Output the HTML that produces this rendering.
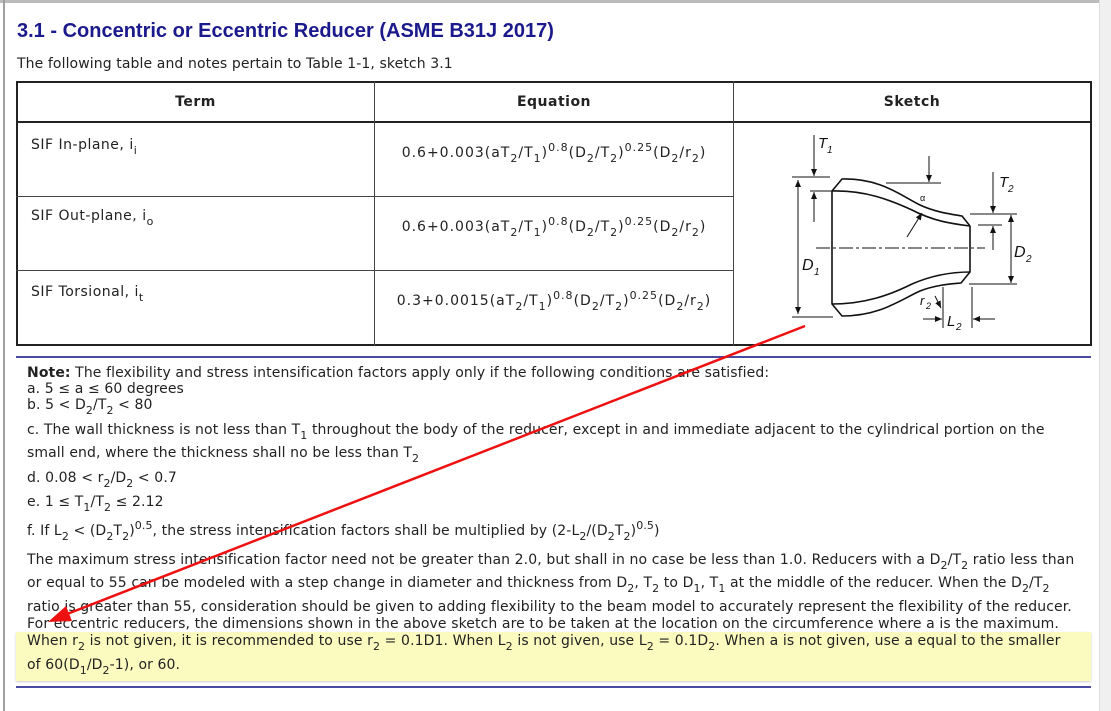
<!DOCTYPE html>
<html><head><meta charset="utf-8">
<style>
*{margin:0;padding:0;box-sizing:border-box}
body{width:1111px;height:711px;background:#fff;position:relative;overflow:hidden;font-family:"DejaVu Sans","Liberation Sans",sans-serif;font-size:14px;color:#222}
.l{position:absolute;white-space:nowrap;letter-spacing:0.1px;line-height:16px}
sub{font-size:11px;vertical-align:-5px;line-height:0}
sup{font-size:11px;vertical-align:6px;line-height:0}
h1{position:absolute;left:17px;top:20px;font-family:"Liberation Sans",sans-serif;font-weight:bold;font-size:20px;color:#1a1a8c;white-space:nowrap}
.cell{position:absolute;white-space:nowrap;letter-spacing:0.5px}
.eq{position:absolute;width:358px;text-align:center;white-space:nowrap;letter-spacing:1px}
</style></head><body>
<div style="position:absolute;left:0;top:0;width:1100px;height:3px;background:#bbb"></div>
<div style="position:absolute;left:3px;top:0;width:2px;height:711px;background:#a0a0a0"></div>
<div style="position:absolute;left:1099px;top:0;width:12px;height:711px;background:#f0f0f0;border-left:1px solid #ddd"></div>

<h1>3.1 - Concentric or Eccentric Reducer (ASME B31J 2017)</h1>
<div class="l" style="left:17px;top:56px">The following table and notes pertain to Table 1-1, sketch 3.1</div>

<div style="position:absolute;left:16px;top:81px;width:1076px;height:265px;border:2px solid #222"></div>
<div style="position:absolute;left:16px;top:121px;width:1076px;height:2px;background:#222"></div>
<div style="position:absolute;left:16px;top:196px;width:718px;height:1px;background:#444"></div>
<div style="position:absolute;left:16px;top:270px;width:718px;height:1px;background:#444"></div>
<div style="position:absolute;left:374px;top:81px;width:1px;height:265px;background:#444"></div>
<div style="position:absolute;left:733px;top:81px;width:1px;height:265px;background:#444"></div>
<div class="cell" style="left:16px;width:359px;text-align:center;top:94px;font-weight:bold">Term</div>
<div class="cell" style="left:375px;width:358px;text-align:center;top:94px;font-weight:bold">Equation</div>
<div class="cell" style="left:733px;width:358px;text-align:center;top:94px;font-weight:bold">Sketch</div>

<div class="cell" style="left:31px;top:137px">SIF In-plane, i<sub>i</sub></div>
<div class="cell" style="left:31px;top:208px">SIF Out-plane, i<sub>o</sub></div>
<div class="cell" style="left:31px;top:284px">SIF Torsional, i<sub>t</sub></div>
<div class="eq" style="left:375px;top:145px">0.6+0.003(aT<sub>2</sub>/T<sub>1</sub>)<sup>0.8</sup>(D<sub>2</sub>/T<sub>2</sub>)<sup>0.25</sup>(D<sub>2</sub>/r<sub>2</sub>)</div>
<div class="eq" style="left:375px;top:219px">0.6+0.003(aT<sub>2</sub>/T<sub>1</sub>)<sup>0.8</sup>(D<sub>2</sub>/T<sub>2</sub>)<sup>0.25</sup>(D<sub>2</sub>/r<sub>2</sub>)</div>
<div class="eq" style="left:375px;top:293px">0.3+0.0015(aT<sub>2</sub>/T<sub>1</sub>)<sup>0.8</sup>(D<sub>2</sub>/T<sub>2</sub>)<sup>0.25</sup>(D<sub>2</sub>/r<sub>2</sub>)</div>

<svg style="position:absolute;left:0;top:0" width="1111" height="711" viewBox="0 0 1111 711">
<defs><marker id="a" markerWidth="8" markerHeight="8" refX="7" refY="4" orient="auto" markerUnits="userSpaceOnUse"><path d="M0,1 L7,4 L0,7 Z" fill="#111"/></marker></defs>
<g fill="none" stroke="#111" stroke-width="1.6">
<path d="M832,191 L842,179 C880,178 900,195 920,205 C935,212 950,214 962,216 L970,226"/>
<path d="M832,191 C865,190 890,200 912,210 C935,222 955,224 970,226"/>
<path d="M832,191 L832,304 L842,316 C880,316 900,300 920,291 C935,285 950,284 961,283 L970,272 L970,226"/>
<path d="M832,304 C865,304 890,295 912,284 C935,274 955,272 970,272"/>
</g>
<g stroke="#111" stroke-width="1" fill="none">
<path d="M816,248 L985,248" stroke-dasharray="14,3,3,3"/>
<path d="M792,177 L830,177 M792,317 L833,317 M810,191 L832,191"/>
<path d="M798,180 L798,314" marker-end="url(#a)"/><path d="M798,250 L798,180" marker-end="url(#a)"/>
<path d="M814,135 L814,176" marker-end="url(#a)"/>
<path d="M814,222 L814,192" marker-end="url(#a)"/>
<path d="M886,183 L941,183"/><path d="M929,156 L929,182" marker-end="url(#a)"/>
<path d="M907,237 L922,213" marker-end="url(#a)"/>
<path d="M970,214 L1017,214 M978,225 L1002,225 M969,284 L1017,284"/>
<path d="M993,172 L993,213" marker-end="url(#a)"/>
<path d="M993,250 L993,226" marker-end="url(#a)"/>
<path d="M1011,250 L1011,215" marker-end="url(#a)"/><path d="M1011,250 L1011,283" marker-end="url(#a)"/>
<path d="M943,287 L943,328 M972,287 L972,328"/>
<path d="M923,319 L942,319" marker-end="url(#a)"/><path d="M995,319 L973,319" marker-end="url(#a)"/>
<path d="M935,296 L941,308" marker-end="url(#a)"/>
</g>
<g font-family="Liberation Sans,sans-serif" font-style="italic" fill="#111">
<text x="818" y="148" font-size="15">T</text><text x="827" y="153" font-size="10">1</text>
<text x="999" y="187" font-size="15">T</text><text x="1008" y="192" font-size="10">2</text>
<text x="802" y="270" font-size="16">D</text><text x="814" y="275" font-size="10">1</text>
<text x="1014" y="257" font-size="16">D</text><text x="1026" y="262" font-size="10">2</text>
<text x="920" y="305" font-size="13">r</text><text x="926" y="309" font-size="9">2</text>
<text x="947" y="326" font-size="15">L</text><text x="956" y="330" font-size="10">2</text>
<text x="920" y="201" font-size="9" font-style="normal">α</text>
</g>
</svg>

<div style="position:absolute;left:16px;top:356px;width:1075px;height:2px;background:#4a4aa0"></div>

<div class="l" style="left:27px;top:365px"><b>Note:</b> The flexibility and stress intensification factors apply only if the following conditions are satisfied:</div>
<div class="l" style="left:27px;top:381px">a. 5 ≤ a ≤ 60 degrees</div>
<div class="l" style="left:27px;top:397px">b. 5 &lt; D<sub>2</sub>/T<sub>2</sub> &lt; 80</div>
<div class="l" style="left:27px;top:422px">c. The wall thickness is not less than T<sub>1</sub> throughout the body of the reducer, except in and immediate adjacent to the cylindrical portion on the</div>
<div class="l" style="left:27px;top:445px">small end, where the thickness shall no be less than T<sub>2</sub></div>
<div class="l" style="left:27px;top:470px">d. 0.08 &lt; r<sub>2</sub>/D<sub>2</sub> &lt; 0.7</div>
<div class="l" style="left:27px;top:494px">e. 1 ≤ T<sub>1</sub>/T<sub>2</sub> ≤ 2.12</div>
<div class="l" style="left:27px;top:523px">f. If L<sub>2</sub> &lt; (D<sub>2</sub>T<sub>2</sub>)<sup>0.5</sup>, the stress intensification factors shall be multiplied by (2-L<sub>2</sub>/(D<sub>2</sub>T<sub>2</sub>)<sup>0.5</sup>)</div>
<div class="l" style="left:27px;top:552px">The maximum stress intensification factor need not be greater than 2.0, but shall in no case be less than 1.0. Reducers with a D<sub>2</sub>/T<sub>2</sub> ratio less than</div>
<div class="l" style="left:27px;top:575px">or equal to 55 can be modeled with a step change in diameter and thickness from D<sub>2</sub>, T<sub>2</sub> to D<sub>1</sub>, T<sub>1</sub> at the middle of the reducer. When the D<sub>2</sub>/T<sub>2</sub></div>
<div class="l" style="left:27px;top:599px">ratio is greater than 55, consideration should be given to adding flexibility to the beam model to accurately represent the flexibility of the reducer.</div>
<div class="l" style="left:27px;top:616px">For eccentric reducers, the dimensions shown in the above sketch are to be taken at the location on the circumference where a is the maximum.</div>
<div style="position:absolute;left:16px;top:632px;width:1075px;height:49px;background:#fbfbc0;box-shadow:0 1px 2px #ccc"></div>
<div class="l" style="left:27px;top:633px">When r<sub>2</sub> is not given, it is recommended to use r<sub>2</sub> = 0.1D1. When L<sub>2</sub> is not given, use L<sub>2</sub> = 0.1D<sub>2</sub>. When a is not given, use a equal to the smaller</div>
<div class="l" style="left:27px;top:657px">of 60(D<sub>1</sub>/D<sub>2</sub>-1), or 60.</div>
<div style="position:absolute;left:16px;top:686px;width:1075px;height:2px;background:#4a4aa0"></div>

<svg style="position:absolute;left:0;top:0" width="1111" height="711">
<line x1="805" y1="326" x2="62" y2="616" stroke="#ee1111" stroke-width="2.5"/>
<path d="M48,622 L66,606 L72,621 Z" fill="#ee1111"/>
</svg>
</body></html>
